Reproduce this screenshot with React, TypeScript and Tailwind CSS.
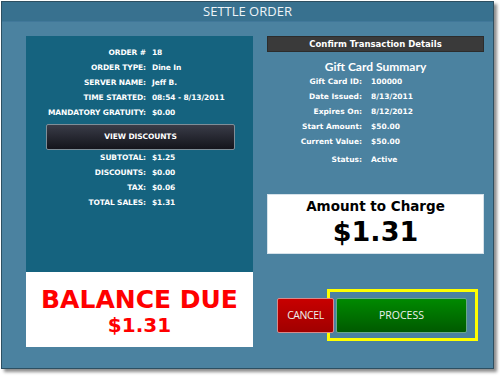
import React from 'react';

const orderRows: [string, string][] = [
  ['ORDER #', '18'],
  ['ORDER TYPE:', 'Dine In'],
  ['SERVER NAME:', 'Jeff B.'],
  ['TIME STARTED:', '08:54 - 8/13/2011'],
  ['MANDATORY GRATUITY:', '$0.00'],
];

const totalRows: [string, string][] = [
  ['SUBTOTAL:', '$1.25'],
  ['DISCOUNTS:', '$0.00'],
  ['TAX:', '$0.06'],
  ['TOTAL SALES:', '$1.31'],
];

const cardRows: [string, string][] = [
  ['Gift Card ID:', '100000'],
  ['Date Issued:', '8/13/2011'],
  ['Expires On:', '8/12/2012'],
  ['Start Amount:', '$50.00'],
  ['Current Value:', '$50.00'],
];

const Rows: React.FC<{ rows: [string, string][]; labelW: string; gap: string }> = ({ rows, labelW, gap }) => (
  <>
    {rows.map(([k, v]) => (
      <div key={k} className="flex h-[15px] items-center">
        <span className={`${labelW} text-right`}>{k}</span>
        <span className={gap}>{v}</span>
      </div>
    ))}
  </>
);

export default function App() {
  const font = { fontFamily: '"DejaVu Sans", Verdana, sans-serif' };
  return (
    <div className="w-[500px] h-[377px] bg-white pl-[1px] pt-[1px]">
      <div className="w-[493px] h-[368px] border border-[#2d4f61] bg-[#4b82a0] shadow-[3px_3px_3px_rgba(0,0,0,0.45)] flex flex-col">
        <div className="h-[20px] bg-[#38718f] border-b border-[#41789a] flex items-center justify-center text-[13px] text-[#eef4f8]" style={{ fontFamily: '"Open Sans", sans-serif' }}>
          SETTLE ORDER
        </div>
        <div className="flex pl-[24px] pt-[14px] gap-[14px] text-white font-bold" style={font}>
          {/* left column */}
          <div className="w-[227px] flex flex-col">
            <div className="h-[236px] bg-[#15637f] pt-[9px] text-[7.5px] tracking-[-0.1px]">
              <Rows rows={orderRows} labelW="w-[120px]" gap="ml-[6px]" />
              <div className="ml-[20px] mt-[4px] w-[189px] h-[26px] rounded-[2px] border border-[#7f8e98] bg-gradient-to-b from-[#3a3c48] to-[#14151c] flex items-center justify-center text-[7.5px]">
                VIEW DISCOUNTS
              </div>
              <Rows rows={totalRows} labelW="w-[120px]" gap="ml-[6px]" />
            </div>
            <div className="h-[75px] bg-white flex flex-col items-center pt-[14px] text-[#ff0000]">
              <div className="text-[25px] leading-[28px]">BALANCE DUE</div>
              <div className="text-[20px] leading-[22px]">$1.31</div>
            </div>
          </div>
          {/* right column */}
          <div className="w-[217px] flex flex-col">
            <div className="h-[16px] bg-[#3a3a3a] border border-[#2c2c2c] flex items-center justify-center text-[8.5px]">
              Confirm Transaction Details
            </div>
            <div className="mt-[8px] h-[14px] leading-[14px] text-center text-[12px] font-bold" style={{ fontFamily: 'Lato, sans-serif' }}>
              Gift Card Summary
            </div>
            <div className="text-[7.5px]">
              <Rows rows={cardRows} labelW="w-[95px]" gap="ml-[9px]" />
              <div className="mt-[3px]">
                <Rows rows={[['Status:', 'Active']]} labelW="w-[95px]" gap="ml-[9px]" />
              </div>
            </div>
            <div className="mt-[27px] h-[60px] bg-white border border-[#d6e2ea] flex flex-col items-center text-black pt-[2px]">
              <div className="text-[13.5px] leading-[18px]">Amount to Charge</div>
              <div className="text-[27px] leading-[34px]">$1.31</div>
            </div>
            <div className="relative mt-[44px] h-[35px] flex ml-[10px] gap-[2px] font-normal text-[10.5px] text-[#eef2ee]" style={{ fontFamily: '"Open Sans", sans-serif' }}>
              <div className="absolute left-[50px] top-[-9px] w-[151px] h-[52px] border-[3px] border-[#ffff00]" />
              <div className="relative z-10 w-[57px] h-[35px] rounded-[2px] border border-[#d88a8a] bg-gradient-to-b from-[#c80000] to-[#a00000] flex items-center justify-center tracking-[-0.4px]">
                CANCEL
              </div>
              <div className="relative z-10 w-[131px] h-[35px] rounded-[2px] border border-[#6aa88a] bg-gradient-to-b from-[#008a00] to-[#005a00] flex items-center justify-center">
                PROCESS
              </div>
            </div>
          </div>
        </div>
      </div>
    </div>
  );
}
